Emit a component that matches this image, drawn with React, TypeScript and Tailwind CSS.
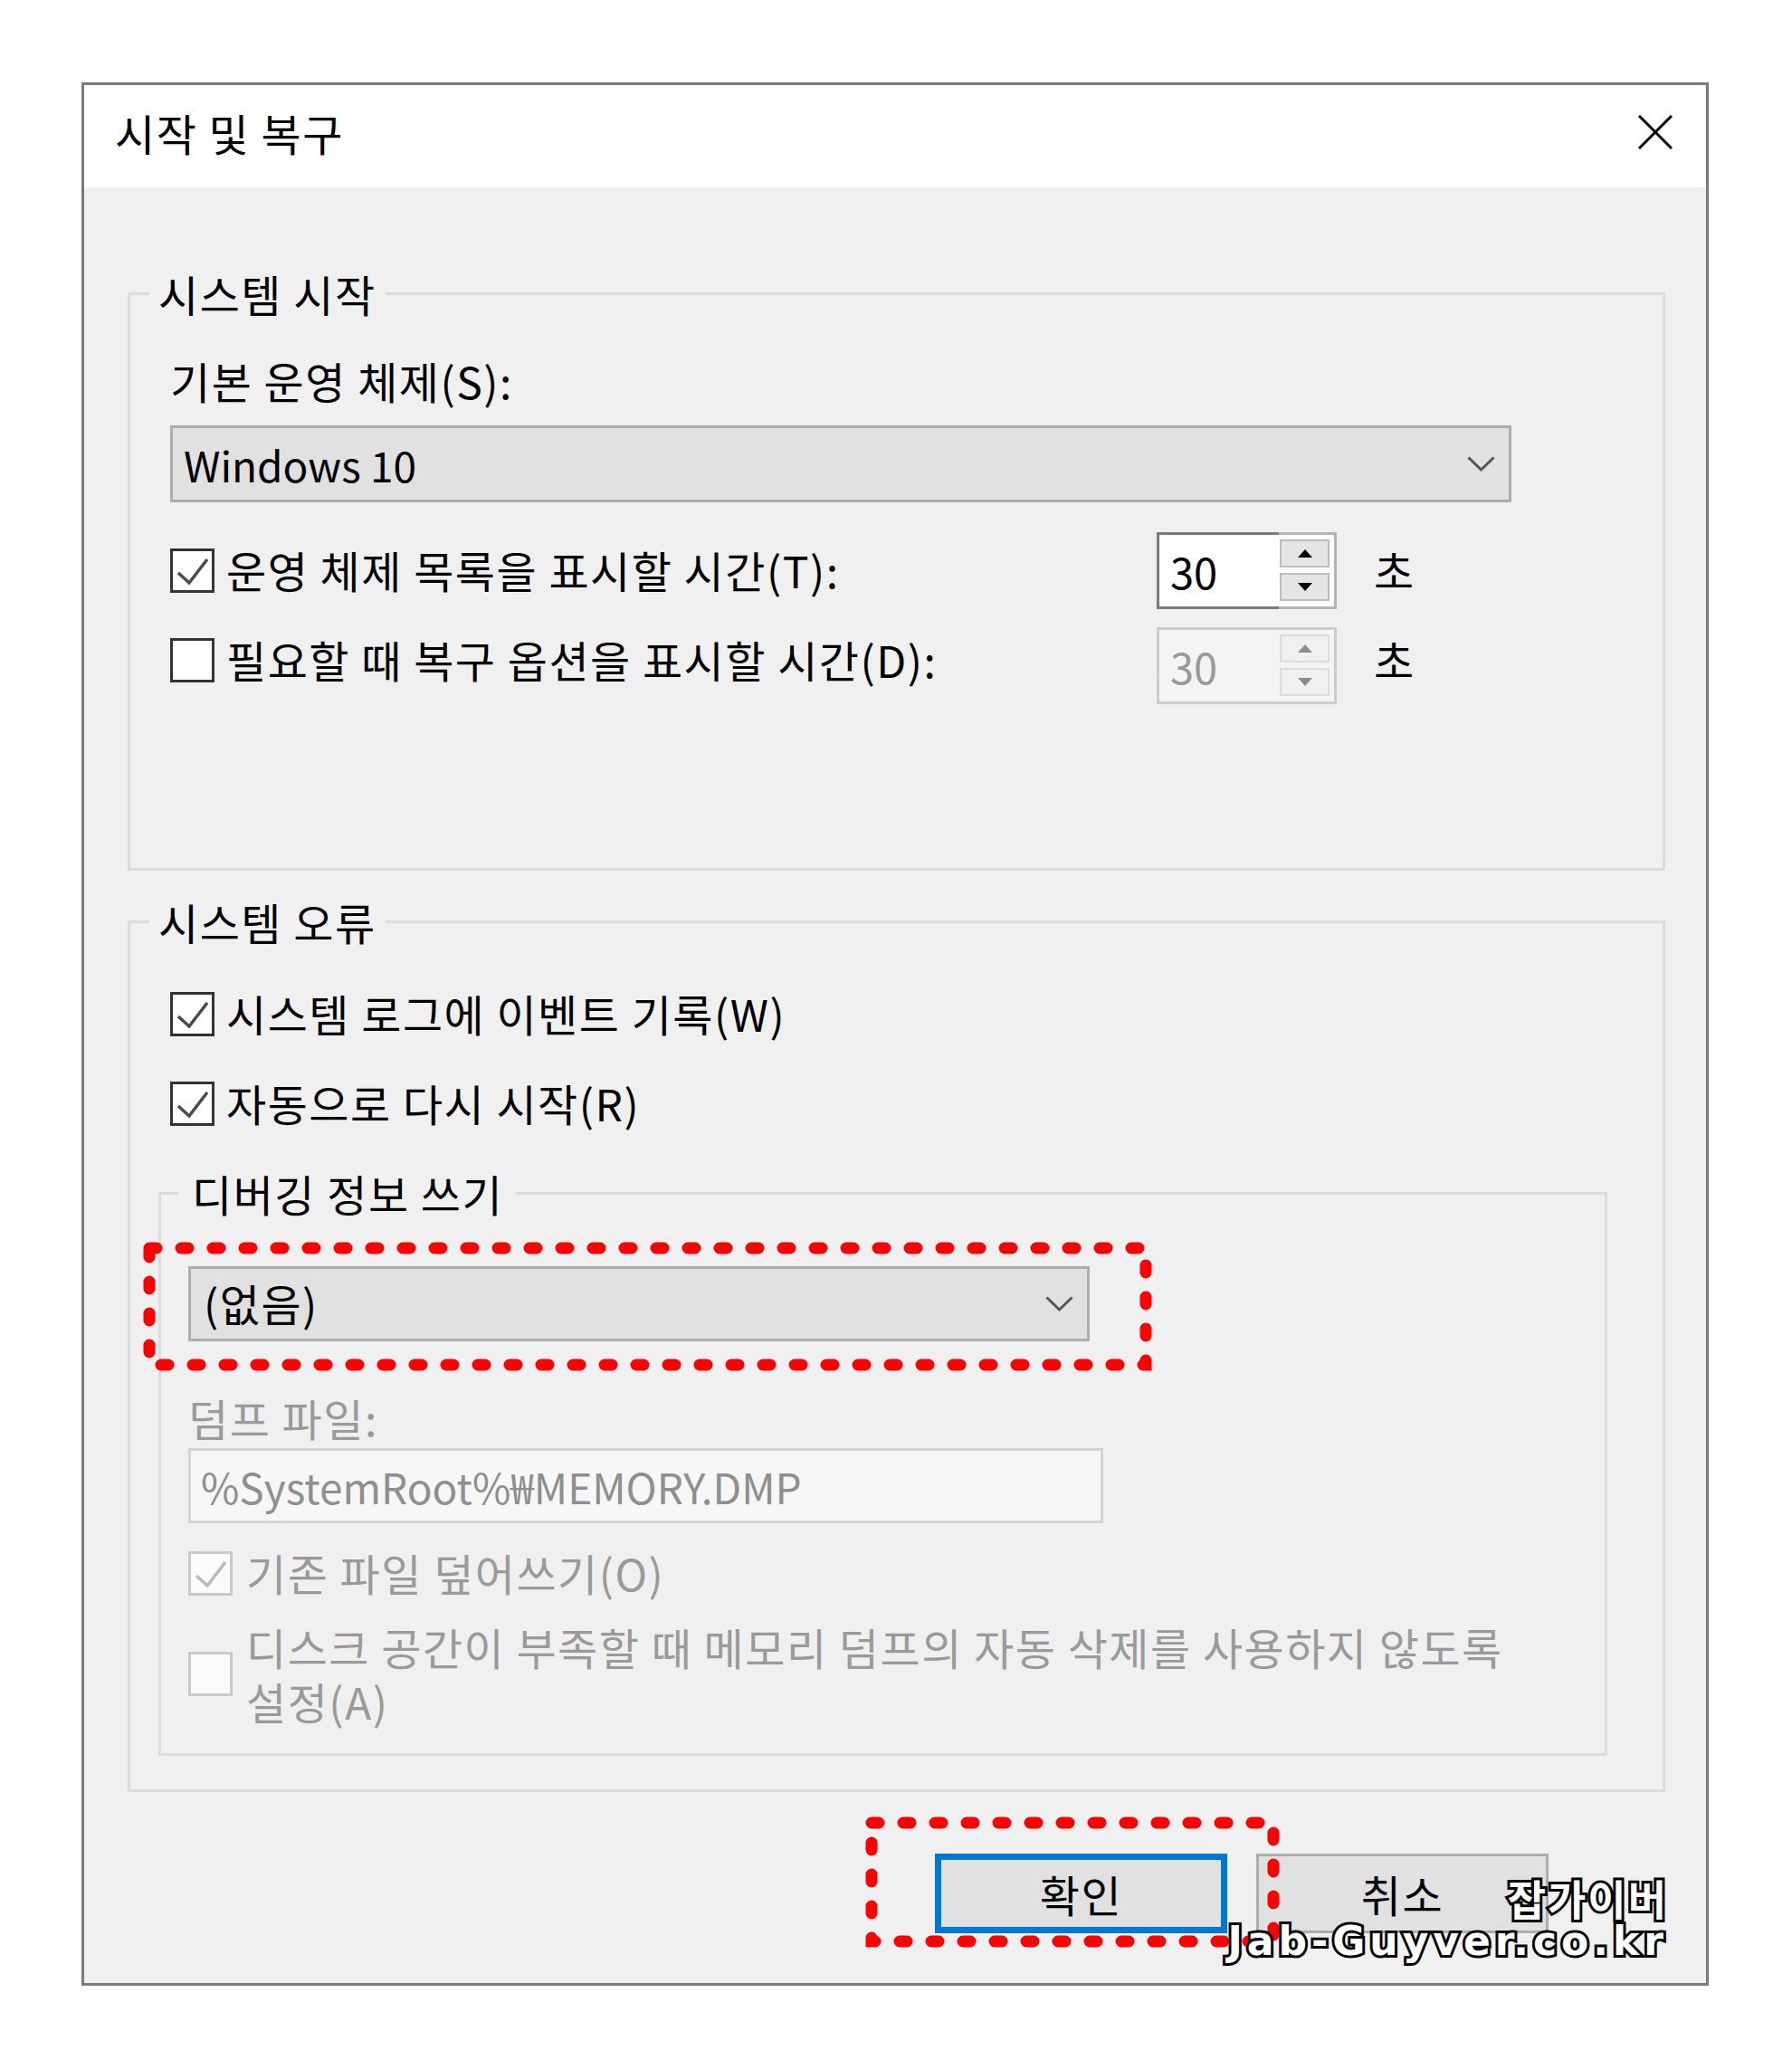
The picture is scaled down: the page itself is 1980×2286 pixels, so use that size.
import React from 'react'

const FONT = "font-['Noto_Sans_CJK_KR',sans-serif]"
const KO = 'text-[48px] leading-none tracking-[1.5px]'

function CheckBox({ checked = false, disabled = false }: { checked?: boolean; disabled?: boolean }) {
  return (
    <div
      className={`flex h-[49px] w-[49px] shrink-0 items-center justify-center border-[3px] ${
        disabled ? 'border-[#c9c9c9] bg-[#fbfbfb]' : 'border-[#333333] bg-white'
      }`}
    >
      {checked && (
        <svg width="43" height="43" viewBox="0 0 43 43" fill="none">
          <polyline
            points="6,24 18,35 38,9"
            stroke={disabled ? '#b9b9b9' : '#4a4a4a'}
            strokeWidth="3.5"
          />
        </svg>
      )}
    </div>
  )
}

function SpinBtn({ up = false, disabled = false }: { up?: boolean; disabled?: boolean }) {
  return (
    <div
      className={`flex h-[31px] items-center justify-center border-2 ${
        disabled ? 'border-[#dcdcdc] bg-[#f0f0f0]' : 'border-[#bdbdbd] bg-[#e5e5e5]'
      }`}
    >
      <svg width="16" height="9" viewBox="0 0 16 9">
        <polygon
          points={up ? '0,9 8,0 16,9' : '0,0 16,0 8,9'}
          fill={disabled ? '#8c8c8c' : '#000000'}
        />
      </svg>
    </div>
  )
}

function Spinner({ disabled = false }: { disabled?: boolean }) {
  return (
    <div className="flex h-[85px] w-[199px] shrink-0">
      <div
        className={`flex h-full w-[135px] items-center border-[3px] border-r-0 pl-[12px] text-[47px] leading-none ${
          disabled ? 'border-[#cccccc] bg-[#f4f4f4] text-[#9a9a9a]' : 'border-[#7a7a7a] bg-white text-black'
        }`}
      >
        30
      </div>
      <div
        className={`flex h-full w-[64px] flex-col gap-[6px] border-[3px] border-l-0 py-[5px] pl-[1px] pr-[5px] ${
          disabled ? 'border-[#cccccc] bg-[#f4f4f4]' : 'border-[#b4b4b4] bg-white'
        }`}
      >
        <SpinBtn up disabled={disabled} />
        <SpinBtn disabled={disabled} />
      </div>
    </div>
  )
}

function Chevron() {
  return (
    <svg width="31" height="17" viewBox="0 0 31 17" fill="none">
      <polyline points="1.5,1.5 15.5,15 29.5,1.5" stroke="#555555" strokeWidth="3" />
    </svg>
  )
}

export default function App() {
  return (
    <div className={`relative h-[2286px] w-[1980px] bg-white pl-[90px] pt-[91px] text-black ${FONT}`}>
      <div className="flex h-[2103px] w-[1798px] flex-col border-[3px] border-[#7a7a7a] bg-[#f0f0f0]">
        {/* title bar */}
        <div className="flex h-[113px] items-center justify-between bg-white pb-[9px] pl-[34px] pr-[37px]">
          <span className={KO}>시작 및 복구</span>
          <svg width="38" height="38" viewBox="0 0 38 38">
            <path d="M1 1 L37 37 M37 1 L1 37" stroke="#000" strokeWidth="3" />
          </svg>
        </div>

        {/* 시스템 시작 */}
        <fieldset className="ml-[48px] mt-[93px] h-[662px] w-[1699px] border-[3px] border-[#dcdcdc]">
          <legend className={`ml-[21px] px-[10px] ${KO}`}>시스템 시작</legend>
          <div className="flex flex-col pl-[44px]">
            <div className={`mt-[48px] h-[48px] ${KO}`}>기본 운영 체제(S):</div>
            <div className="mt-[26px] flex h-[85px] w-[1482px] items-center justify-between border-[3px] border-[#adadad] bg-[#e1e1e1] pl-[12px] pr-[15px] text-[46px] leading-none">
              <span>Windows 10</span>
              <Chevron />
            </div>
            <div className="mt-[33px] flex h-[85px] items-center">
              <div className="flex w-[1090px] items-center gap-[13px]">
                <CheckBox checked />
                <span className={`-mt-[4px] ${KO}`}>운영 체제 목록을 표시할 시간(T):</span>
              </div>
              <Spinner />
              <span className={`ml-[41px] -mt-[4px] ${KO}`}>초</span>
            </div>
            <div className="mt-[20px] flex h-[85px] items-center">
              <div className="-mt-[12px] flex w-[1090px] items-center gap-[13px]">
                <CheckBox />
                <span className={`-mt-[4px] ${KO}`}>필요할 때 복구 옵션을 표시할 시간(D):</span>
              </div>
              <Spinner disabled />
              <span className={`ml-[41px] -mt-[16px] ${KO}`}>초</span>
            </div>
          </div>
        </fieldset>

        {/* 시스템 오류 */}
        <fieldset className="ml-[48px] mt-[32px] h-[986px] w-[1699px] border-[3px] border-[#dcdcdc]">
          <legend className={`ml-[21px] px-[10px] ${KO}`}>시스템 오류</legend>
          <div className="flex flex-col">
            <div className="ml-[44px] mt-[54px] flex h-[49px] items-center gap-[13px]">
              <CheckBox checked />
              <span className={`-mt-[3px] ${KO}`}>시스템 로그에 이벤트 기록(W)</span>
            </div>
            <div className="ml-[44px] mt-[50px] flex h-[49px] items-center gap-[13px]">
              <CheckBox checked />
              <span className={`-mt-[3px] ${KO}`}>자동으로 다시 시작(R)</span>
            </div>

            <fieldset className="ml-[31px] mt-[50px] h-[646px] w-[1601px] border-[3px] border-[#dcdcdc]">
              <legend className={`ml-[20px] px-[14px] ${KO}`}>디버깅 정보 쓰기</legend>
              <div className="flex flex-col pl-[30px]">
                <div className={`mt-[57px] flex h-[83px] w-[996px] items-center justify-between border-[3px] border-[#adadad] bg-[#e1e1e1] pl-[14px] pr-[15px] ${KO}`}>
                  <span className="-mt-[3px]">(없음)</span>
                  <Chevron />
                </div>
                <div className={`mt-[60px] h-[48px] text-[#9a9a9a] ${KO}`}>덤프 파일:</div>
                <div className="mt-[10px] flex h-[83px] w-[1011px] items-center border-[3px] border-[#d4d4d4] bg-[#f7f7f7] pl-[11px] text-[46px] leading-none text-[#8f8f8f]">
                  %SystemRoot%₩MEMORY.DMP
                </div>
                <div className="mt-[31px] flex h-[49px] items-center gap-[15px]">
                  <CheckBox checked disabled />
                  <span className={`-mt-[3px] text-[#9a9a9a] ${KO}`}>기존 파일 덮어쓰기(O)</span>
                </div>
                <div className="mt-[26px] flex items-center gap-[15px]">
                  <CheckBox disabled />
                  <span className="w-[1420px] text-[48px] leading-[60px] tracking-[1.5px] text-[#9a9a9a]">
                    디스크 공간이 부족할 때 메모리 덤프의 자동 삭제를 사용하지 않도록 설정(A)
                  </span>
                </div>
              </div>
            </fieldset>
          </div>
        </fieldset>

        {/* buttons */}
        <div className="mt-[68px] flex justify-end gap-[32px] pr-[174px]">
          <button className={`flex h-[88px] w-[323px] items-center justify-center border-[7px] border-[#0078d7] bg-[#e1e1e1] ${KO}`}>
            확인
          </button>
          <button className={`flex h-[88px] w-[323px] items-center justify-center border-[3px] border-[#adadad] bg-[#e1e1e1] ${KO}`}>
            취소
          </button>
        </div>
      </div>

      {/* red annotation boxes */}
      <svg className="pointer-events-none absolute left-0 top-0" width="1980" height="2286" viewBox="0 0 1980 2286" fill="none">
        <rect x="165" y="1379" width="1101" height="129" stroke="#ff0000" strokeWidth="13" strokeDasharray="8 27" strokeLinecap="round" />
        <rect x="963" y="2014" width="444" height="131" stroke="#ff0000" strokeWidth="13" strokeDasharray="8 27" strokeLinecap="round" />
      </svg>

      {/* watermark */}
      <div className="absolute right-[137px] top-[2072px] flex flex-col items-end text-white [-webkit-text-stroke:6px_#000] [paint-order:stroke_fill]">
        <span className="text-[46px] font-bold leading-[48px] tracking-[2px]">잡가이버</span>
        <span className="font-['DejaVu_Sans',sans-serif] text-[44px] font-bold leading-[50px] tracking-[5px]">Jab-Guyver.co.kr</span>
      </div>
    </div>
  )
}
